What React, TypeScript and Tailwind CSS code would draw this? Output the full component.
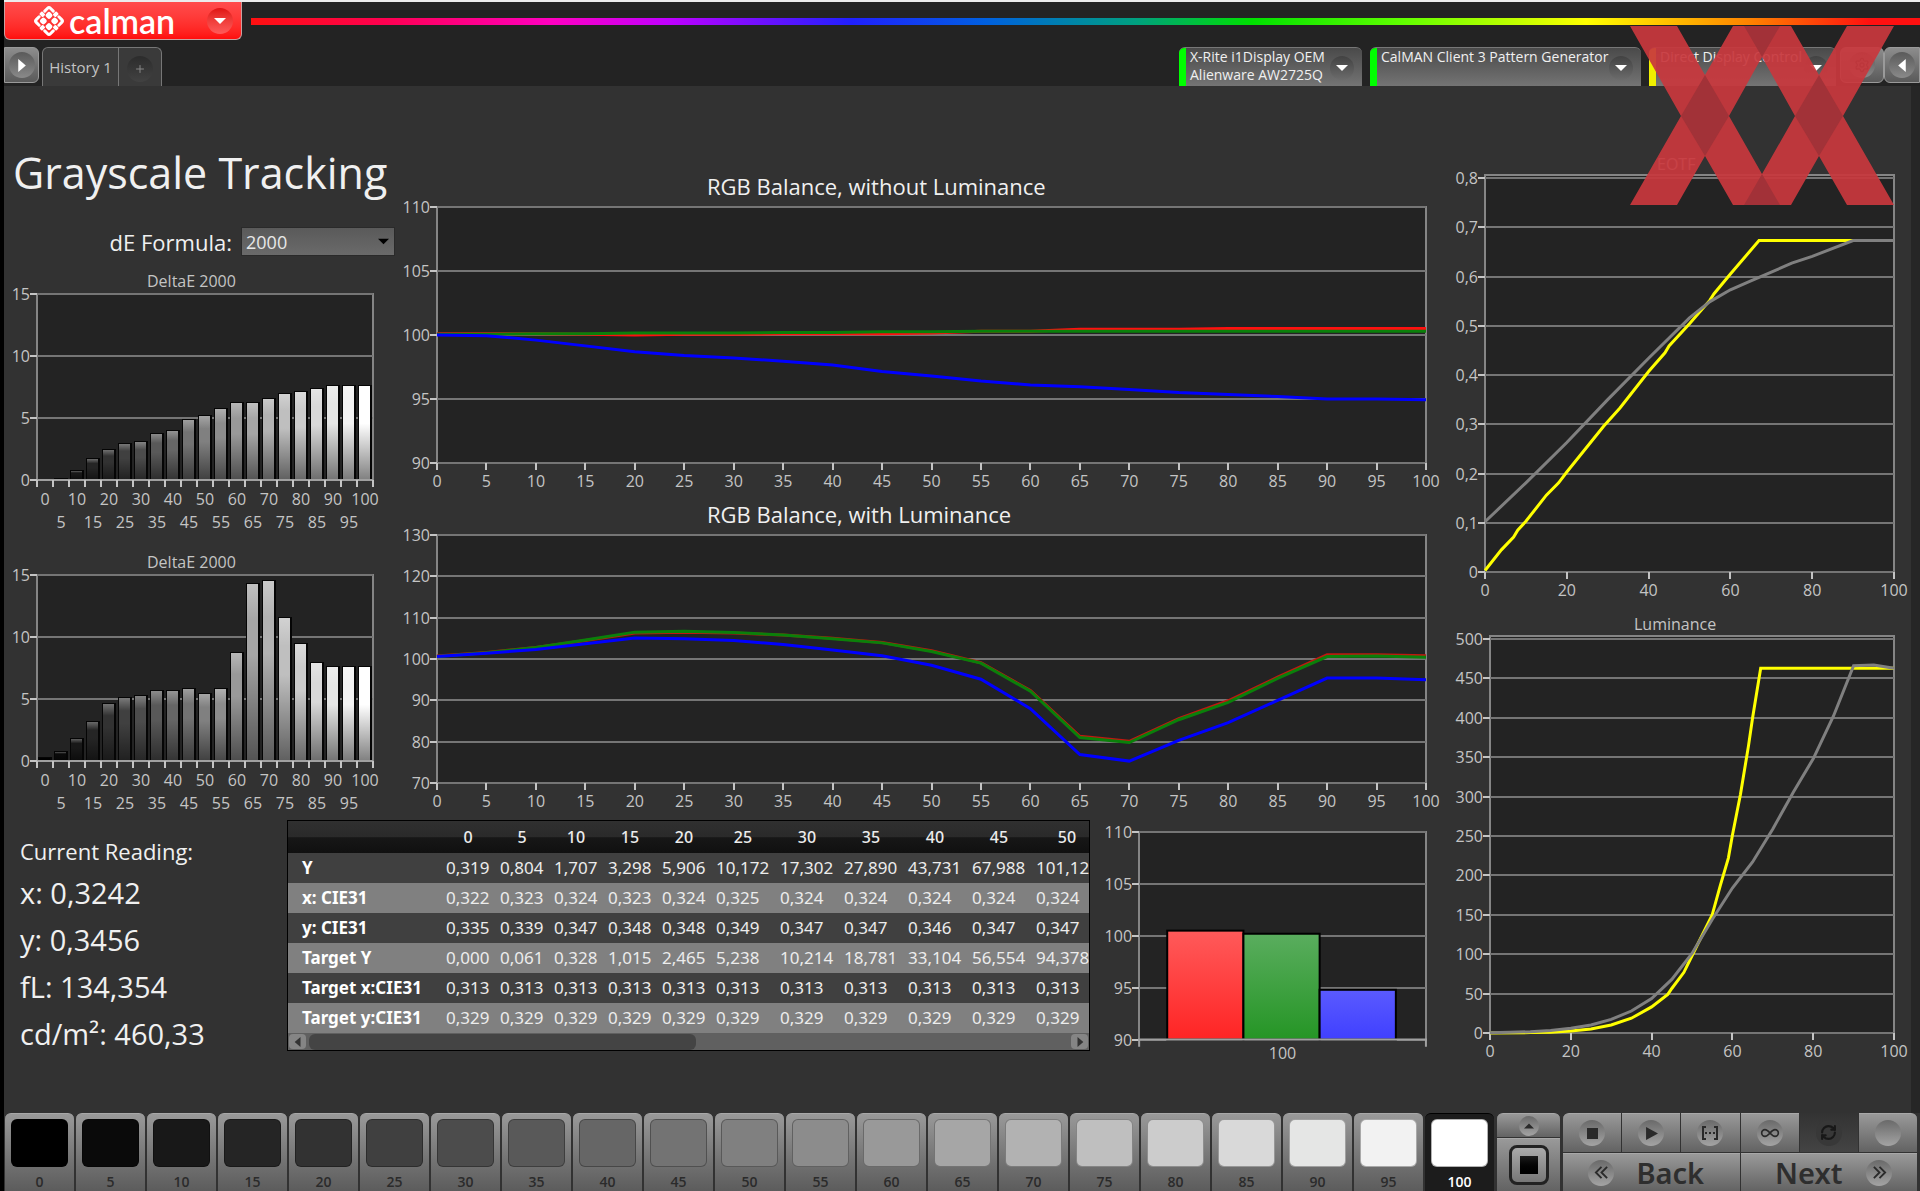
import React from 'react';
import { Infinity as InfinityIcon, Plus, RefreshCw, Settings } from 'lucide-react';
import clsx from 'clsx';

type Point = [number, number];

interface Plot {
  left: number;
  right: number;
  top: number;
  bottom: number;
}

interface Series {
  color: string;
  points: Point[];
}

const STEPS = Array.from({ length: 21 }, (_, i) => i * 5);
const SWATCHES = [
  '#000000', '#0a0a0a', '#181818', '#252525', '#323232', '#404040', '#4c4c4c',
  '#595959', '#666666', '#737373', '#808080', '#8c8c8c', '#999999', '#a6a6a6',
  '#b2b2b2', '#bfbfbf', '#cccccc', '#d9d9d9', '#e5e6e5', '#f2f2f2', '#ffffff',
];

const bySteps = (values: number[]): Point[] => values.map((v, i) => [i * 5, v]);

const DELTA_E = [0, 0.13, 0.8, 1.75, 2.5, 3, 3.12, 3.8, 4.05, 4.9, 5.25, 5.8, 6.3, 6.3, 6.65, 7.05, 7.2, 7.45, 7.7, 7.7, 7.7];
const DELTA_E_LUM = [0.35, 0.8, 1.85, 3.2, 4.65, 5.15, 5.35, 5.7, 5.7, 5.85, 5.5, 5.85, 8.8, 14.35, 14.6, 11.65, 9.55, 8, 7.65, 7.65, 7.65];

const BALANCE: Series[] = [
  { color: '#ff1010', points: bySteps([100.1, 100.1, 100.1, 100.05, 100, 100.05, 100.05, 100.1, 100.1, 100.1, 100.15, 100.3, 100.3, 100.45, 100.45, 100.45, 100.5, 100.5, 100.5, 100.5, 100.5]) },
  { color: '#0a800a', points: bySteps([100.05, 100.05, 100.1, 100.1, 100.15, 100.15, 100.15, 100.2, 100.2, 100.25, 100.25, 100.3, 100.3, 100.3, 100.3, 100.3, 100.3, 100.3, 100.3, 100.3, 100.3]) },
  { color: '#0000ff', points: bySteps([100, 99.95, 99.6, 99.15, 98.7, 98.4, 98.2, 97.95, 97.65, 97.15, 96.8, 96.4, 96.1, 95.95, 95.75, 95.5, 95.35, 95.2, 95, 95, 94.95]) },
];

const BALANCE_LUM: Series[] = [
  { color: '#c01810', points: bySteps([100.7, 101.6, 102.8, 104.5, 106.3, 106.5, 106.3, 105.8, 105, 104, 102, 99.1, 92.4, 81.3, 80.1, 85.6, 89.9, 95.6, 101, 101, 100.8]) },
  { color: '#0a800a', points: bySteps([100.6, 101.5, 102.8, 104.6, 106.5, 106.7, 106.4, 105.8, 104.9, 103.9, 101.8, 99, 92.2, 81, 79.8, 85.3, 89.5, 95.3, 100.6, 100.7, 100.4]) },
  { color: '#0000ff', points: bySteps([100.6, 101.4, 102.3, 103.7, 105.1, 104.9, 104.5, 103.5, 102.2, 100.8, 98.5, 95.1, 88, 76.9, 75.3, 80.3, 84.6, 90, 95.4, 95.4, 95]) },
];

const EOTF: Series[] = [
  { color: '#ffff00', points: [[0, 0.003], [4, 0.045], [7, 0.071], [8, 0.085], [10, 0.103], [15, 0.156], [18, 0.181], [20, 0.203], [29, 0.296], [33, 0.333], [40, 0.407], [44, 0.445], [45, 0.459], [50, 0.504], [55, 0.552], [56, 0.565], [60, 0.605], [67, 0.673], [100, 0.673]] },
  { color: '#808080', points: [[0, 0.102], [10, 0.181], [20, 0.263], [30, 0.35], [40, 0.434], [50, 0.516], [55, 0.549], [60, 0.573], [65, 0.591], [70, 0.609], [75, 0.627], [80, 0.641], [90, 0.673], [100, 0.673]] },
];

const LUMINANCE: Series[] = [
  { color: '#ffff00', points: [[0, 0], [10, 0.5], [15, 1], [20, 2.5], [25, 5.2], [30, 10.2], [35, 18.8], [40, 33.1], [44, 49], [45, 56.5], [48, 77], [50, 98], [55, 150], [57, 187], [59, 222], [60, 251], [62, 303], [64, 365], [65, 400], [67, 463], [100, 463]] },
  { color: '#808080', points: bySteps([0.3, 0.8, 1.7, 3.3, 5.9, 10.2, 17.3, 27.9, 43.7, 68, 101, 144, 184, 217, 259, 305, 348, 402, 466, 467, 463]) },
];

const COLUMNS = ['0', '5', '10', '15', '20', '25', '30', '35', '40', '45', '50'];
const ROWS = [
  { label: 'Y', values: ['0,319', '0,804', '1,707', '3,298', '5,906', '10,172', '17,302', '27,890', '43,731', '67,988', '101,12'] },
  { label: 'x: CIE31', values: ['0,322', '0,323', '0,324', '0,323', '0,324', '0,325', '0,324', '0,324', '0,324', '0,324', '0,324'] },
  { label: 'y: CIE31', values: ['0,335', '0,339', '0,347', '0,348', '0,348', '0,349', '0,347', '0,347', '0,346', '0,347', '0,347'] },
  { label: 'Target Y', values: ['0,000', '0,061', '0,328', '1,015', '2,465', '5,238', '10,214', '18,781', '33,104', '56,554', '94,378'] },
  { label: 'Target x:CIE31', values: COLUMNS.map(() => '0,313') },
  { label: 'Target y:CIE31', values: COLUMNS.map(() => '0,329') },
];

const label = 'fill-[#c4c4c4] text-[16px]';

interface AxesProps {
  plot: Plot;
  yTicks: number[];
  toY: (value: number) => number;
}

function Axes({ plot, yTicks, toY }: AxesProps) {
  return (
    <g shapeRendering="crispEdges">
      <rect
        x={plot.left}
        y={plot.top}
        width={plot.right - plot.left}
        height={plot.bottom - plot.top}
        fill="#232323"
        stroke="#858585"
        strokeWidth="2"
      />
      {yTicks.map((tick) => (
        <g key={tick}>
          <line x1={plot.left} x2={plot.right} y1={toY(tick)} y2={toY(tick)} stroke="#757575" strokeWidth="2" />
          <line x1={plot.left - 7} x2={plot.left} y1={toY(tick)} y2={toY(tick)} stroke="#c4c4c4" strokeWidth="2" />
        </g>
      ))}
    </g>
  );
}

function YLabels({ plot, yTicks, toY }: AxesProps) {
  return (
    <>
      {yTicks.map((tick) => (
        <text key={tick} x={plot.left - 7} y={toY(tick) + 6} textAnchor="end" className={label}>
          {String(tick).replace('.', ',')}
        </text>
      ))}
    </>
  );
}

interface LineChartProps {
  title: string;
  titleX: number;
  titleY: number;
  titleClass: string;
  width: number;
  height: number;
  plot: Plot;
  yTicks: number[];
  /** distance between the frame and the highest grid line */
  headroom?: number;
  xTicks: number[];
  series: Series[];
}

function LineChart({ title, titleX, titleY, titleClass, width, height, plot, yTicks, headroom = 0, xTicks, series }: LineChartProps) {
  const min = yTicks[0];
  const max = yTicks[yTicks.length - 1];
  const toX = (v: number) => plot.left + (v / 100) * (plot.right - plot.left);
  const toY = (v: number) => plot.bottom - ((v - min) / (max - min)) * (plot.bottom - plot.top - headroom);

  return (
    <svg viewBox={`0 0 ${width} ${height}`} className="block h-auto w-full" role="img" aria-label={title}>
      <text x={titleX} y={titleY} className={titleClass}>{title}</text>
      <Axes plot={plot} yTicks={yTicks} toY={toY} />
      <YLabels plot={plot} yTicks={yTicks} toY={toY} />
      {xTicks.map((tick) => (
        <g key={tick}>
          <line x1={toX(tick)} x2={toX(tick)} y1={plot.bottom} y2={plot.bottom + 7} stroke="#c4c4c4" strokeWidth="2" shapeRendering="crispEdges" />
          <text x={toX(tick)} y={plot.bottom + 24} textAnchor="middle" className={label}>{tick}</text>
        </g>
      ))}
      {series.map((s) => (
        <polyline
          key={s.color}
          points={s.points.map(([x, y]) => `${toX(x)},${toY(y)}`).join(' ')}
          fill="none"
          stroke={s.color}
          strokeWidth="3"
        />
      ))}
    </svg>
  );
}

function DeltaChart({ values, id }: { values: number[]; id: string }) {
  const plot = { left: 33, right: 369, top: 25, bottom: 211 };
  const yTicks = [0, 5, 10, 15];
  const toY = (v: number) => plot.bottom - (v / 15) * (plot.bottom - plot.top);

  return (
    <svg viewBox="0 0 393 266" className="block h-auto w-full" role="img" aria-label="DeltaE 2000">
      <defs>
        <linearGradient id={id} x1="0" y1="0" x2="0" y2="1">
          <stop offset="0" stopColor="#fff" stopOpacity="0.3" />
          <stop offset="0.2" stopColor="#fff" stopOpacity="0" />
          <stop offset="0.4" stopColor="#000" stopOpacity="0" />
          <stop offset="1" stopColor="#000" stopOpacity="0.5" />
        </linearGradient>
      </defs>
      <text x="143" y="18" className={label}>DeltaE 2000</text>
      <Axes plot={plot} yTicks={yTicks} toY={toY} />
      <YLabels plot={plot} yTicks={yTicks} toY={toY} />
      {values.map((value, i) => {
        const x = plot.left + i * 16 + 1;
        const height = plot.bottom - toY(value);
        return (
          <g key={i} shapeRendering="crispEdges">
            <rect x={x} y={toY(value)} width="14" height={height} fill="#050505" />
            <rect x={x + 1} y={toY(value) + 1} width="11" height={Math.max(height - 1, 0)} fill={SWATCHES[i]} />
            <rect x={x + 1} y={toY(value) + 1} width="11" height={Math.max(height - 1, 0)} fill={`url(#${id})`} />
          </g>
        );
      })}
      <line x1={plot.left} x2={plot.right} y1={plot.bottom} y2={plot.bottom} stroke="#a0a0a0" strokeWidth="2" shapeRendering="crispEdges" />
      {[...STEPS, 105].map((step, i) => (
        <line key={step} x1={plot.left + i * 16} x2={plot.left + i * 16} y1={plot.bottom} y2={plot.bottom + 7} stroke="#c4c4c4" strokeWidth="2" shapeRendering="crispEdges" />
      ))}
      {STEPS.map((step, i) => (
        <text key={step} x={plot.left + i * 16 + 8} y={plot.bottom + (i % 2 ? 48 : 25)} textAnchor="middle" className={label}>
          {step}
        </text>
      ))}
    </svg>
  );
}

function RgbBars() {
  const plot = { left: 49, right: 335, top: 12, bottom: 219 };
  const yTicks = [90, 95, 100, 105, 110];
  const toY = (v: number) => plot.bottom - ((v - 90) / 20) * (plot.bottom - plot.top);
  const bars = [
    { id: 'bar-r', x: 77, value: 100.5, from: '#ff5a5a', to: '#ff2424' },
    { id: 'bar-g', x: 153, value: 100.2, from: '#5aad5e', to: '#259525' },
    { id: 'bar-b', x: 229, value: 94.8, from: '#5a5aff', to: '#4040ff' },
  ];

  return (
    <svg viewBox="0 0 356 245" className="block h-auto w-full" role="img" aria-label="RGB levels">
      <defs>
        {bars.map((bar) => (
          <linearGradient key={bar.id} id={bar.id} x1="0" y1="0" x2="0" y2="1">
            <stop offset="0" stopColor={bar.from} />
            <stop offset="1" stopColor={bar.to} />
          </linearGradient>
        ))}
      </defs>
      <Axes plot={plot} yTicks={yTicks} toY={toY} />
      <YLabels plot={plot} yTicks={yTicks} toY={toY} />
      {bars.map((bar) => (
        <rect key={bar.id} x={bar.x} y={toY(bar.value)} width="76" height={plot.bottom - toY(bar.value)} fill={`url(#${bar.id})`} stroke="#000" strokeWidth="2" />
      ))}
      <path d={`M${plot.left} ${plot.bottom + 7}V${plot.bottom}H${plot.right}v7`} fill="none" stroke="#a0a0a0" strokeWidth="2" />
      <text x="192" y="238" textAnchor="middle" className={label}>100</text>
    </svg>
  );
}

function Disc({ className, children }: { className?: string; children?: React.ReactNode }) {
  return (
    <span className={clsx('flex shrink-0 items-center justify-center rounded-full', className ?? 'size-[26px] bg-linear-to-b from-[#6a6a6a] to-[#a4a4a4] text-[#2a2a2a]')}>
      {children}
    </span>
  );
}

function Arrow({ d, size = 12 }: { d: string; size?: number }) {
  return (
    <svg viewBox="0 0 12 12" width={size} height={size} fill="currentColor" aria-hidden="true">
      <path d={d} />
    </svg>
  );
}

const DOWN = 'M0 3h12L6 9z';
const RIGHT = 'M3 0v12l7-6z';
const LEFT = 'M9 0v12L2 6z';

function Logo() {
  return (
    <svg viewBox="0 0 32 32" className="size-8" fill="none" stroke="#fff" aria-hidden="true">
      <g transform="rotate(45 16 16)">
        <path strokeWidth="3" strokeLinecap="round" d="M12 6H8a2 2 0 0 0-2 2V12M20 6h4a2 2 0 0 1 2 2V12M12 26H8a2 2 0 0 1-2-2V20M20 26h4a2 2 0 0 0 2-2V20" />
        <g fill="#fff" stroke="none">
          <rect x="14" y="4" width="4" height="5" rx="1" />
          <rect x="14" y="23" width="4" height="5" rx="1" />
          <rect x="4" y="14" width="5" height="4" rx="1" />
          <rect x="23" y="14" width="5" height="4" rx="1" />
          <rect x="9" y="9" width="6" height="6" rx="2" />
          <rect x="17" y="9" width="6" height="6" rx="2" />
          <rect x="9" y="17" width="6" height="6" rx="2" />
          <rect x="17" y="17" width="6" height="6" rx="2" />
        </g>
      </g>
    </svg>
  );
}

function Watermark() {
  return (
    <svg viewBox="0 0 264 179" className="pointer-events-none absolute top-[26px] right-[26px] h-[179px] w-[264px]" aria-hidden="true">
      <path
        fill="#c8383d"
        fillOpacity="0.93"
        d="M0 0h47l28 49 28-49h58l28 49 28-49h47L213 90l51 89h-47l-28-49-28 49h-58l-28-49-28 49H0l51-89z M132 31L99 90l33 58 33-58z"
        fillRule="evenodd"
      />
      <g fill="#a03238" fillOpacity="0.95">
        <path d="M75 49l24 41-24 40-24-40zM189 49l24 41-24 40-24-40z" />
        <path d="M114 0h36l-18 31zM114 179h36l-18-31z" />
      </g>
    </svg>
  );
}

interface DeviceProps {
  lines: string[];
  stripe: string;
  width: string;
}

function Device({ lines, stripe, width }: DeviceProps) {
  return (
    <button className={clsx('flex h-[39px] items-start overflow-hidden rounded-t-md border-t border-[#777] bg-linear-to-b from-[#4a4a4a] to-[#747474] text-left', width)}>
      <span className={clsx('w-[7px] shrink-0 self-stretch', stripe)} />
      <span className="flex-1 pl-1 text-[14px] leading-[18px] whitespace-nowrap text-[#f0f0f0]">
        {lines.map((line) => (
          <span key={line} className="block">{line}</span>
        ))}
      </span>
      <Disc className="mt-2 mr-2 size-[24px] bg-linear-to-b from-[#424242] to-[#6c6c6c] text-white">
        <Arrow d={DOWN} />
      </Disc>
    </button>
  );
}

const chromeButton = 'flex items-center justify-center border border-[#9a9a9a] bg-linear-to-b from-[#8d8d8d] to-[#5a5a5a]';

function Header() {
  return (
    <header className="border-t-2 border-[#ececec] bg-[#232323]">
      <div className="flex items-center gap-[9px]">
        <button className="flex h-[38px] w-[238px] items-center rounded-b-md border border-t-0 border-[#c9a0a0] bg-linear-to-b from-[#ff4c4c] to-[#ff0c0c] pl-7 text-white" aria-label="calman menu">
          <Logo />
          <span className="flex-1 pl-1 text-left font-[Lato,sans-serif] text-[34px] leading-[38px] font-semibold">calman</span>
          <Disc className="mr-2 size-[26px] bg-linear-to-b from-[#e01010] to-[#ff5a5a] text-white">
            <Arrow d={DOWN} />
          </Disc>
        </button>
        <div className="h-[7px] flex-1 bg-[linear-gradient(90deg,#ff1010_0%,#ff0050_8%,#ff00c0_18%,#c000ff_25%,#2020ff_36%,#0060e0_44%,#00a080_53%,#00e000_60%,#60ff00_69%,#ffff00_80%,#ff8000_90%,#ff1010_97%)]" />
      </div>
      <div className="flex items-start justify-between pt-[7px]">
        <div className="flex">
          <button className={clsx(chromeButton, 'mr-[3px] h-[36px] w-[35px] rounded-r-md')} aria-label="Expand">
            <Disc className="size-[26px] bg-linear-to-b from-[#5a5a5a] to-[#8a8a8a] text-white">
              <Arrow d={RIGHT} size={13} />
            </Disc>
          </button>
          <button className="h-[39px] w-[77px] rounded-tl-md border border-b-0 border-[#777] bg-[#3a3a3a] text-[15px] text-[#c4c4c4]">
            History 1
          </button>
          <button className="flex h-[39px] w-[43px] items-center justify-center rounded-tr-md border border-b-0 border-l-0 border-[#777] bg-[#3a3a3a]" aria-label="Add history">
            <Disc className="mt-1 size-[26px] bg-linear-to-b from-[#2c2c2c] to-[#424242] text-[#888]">
              <Plus size={12} />
            </Disc>
          </button>
        </div>
        <div className="flex">
          <div className="mr-1 flex gap-2">
            <Device width="w-[183px]" stripe="bg-[#00ff00]" lines={['X-Rite i1Display OEM', 'Alienware AW2725Q']} />
            <Device width="w-[271px]" stripe="bg-[#00ff00]" lines={['CalMAN Client 3 Pattern Generator']} />
            <Device width="w-[187px]" stripe="bg-[#f0f000]" lines={['Direct Display Control']} />
          </div>
          <button className={clsx(chromeButton, 'h-[36px] w-[44px] rounded-md')} aria-label="Settings">
            <Disc className="size-[26px] bg-linear-to-b from-[#5a5a5a] to-[#8a8a8a] text-[#222]">
              <Settings size={16} />
            </Disc>
          </button>
          <button className={clsx(chromeButton, 'h-[36px] w-[36px] rounded-l-md')} aria-label="Collapse">
            <Disc className="size-[26px] bg-linear-to-b from-[#5a5a5a] to-[#8a8a8a] text-white">
              <Arrow d={LEFT} size={13} />
            </Disc>
          </button>
        </div>
      </div>
    </header>
  );
}

function ReadingsTable() {
  return (
    <div className="h-[231px] min-w-0 overflow-hidden border border-black bg-[#404040]">
      <table className="w-[815px] table-fixed border-collapse font-[Noto_Sans,sans-serif] text-[17px] leading-[20px] whitespace-nowrap text-[#ececec]">
        <colgroup>
          <col className="w-[153px]" />
          {COLUMNS.map((column, i) => (
            <col key={column} className={clsx(i < 5 ? 'w-[54px]' : i < 10 ? 'w-[64px]' : 'w-[72px]')} />
          ))}
        </colgroup>
        <thead>
          <tr className="h-[32px] bg-[linear-gradient(#303030,#2a2a2a_50%,#171717_52%,#101010)]">
            <td />
            {COLUMNS.map((column) => (
              <th key={column} scope="col" className="p-0 text-center text-[16px] font-medium">{column}</th>
            ))}
          </tr>
        </thead>
        <tbody>
          {ROWS.map((row) => (
            <tr key={row.label} className="h-[30px] odd:bg-[#404040] even:bg-[#808080]">
              <th scope="row" className="p-0 pl-[14px] text-left font-bold text-white">{row.label}</th>
              {row.values.map((value, i) => (
                <td key={i} className="p-0 pl-[5px]">{value}</td>
              ))}
            </tr>
          ))}
        </tbody>
      </table>
      <div className="flex h-[17px] items-center justify-between bg-[#606060] px-px text-[#333]">
        <button className="flex h-[15px] w-[17px] items-center justify-center rounded-sm bg-[#858585]" aria-label="Scroll left">
          <Arrow d={LEFT} size={10} />
        </button>
        <div className="flex-1 px-[3px]">
          <div className="h-[16px] w-[51%] rounded-md bg-[#444]" />
        </div>
        <button className="flex h-[15px] w-[17px] items-center justify-center rounded-sm bg-[#858585]" aria-label="Scroll right">
          <Arrow d={RIGHT} size={10} />
        </button>
      </div>
    </div>
  );
}

const footerButton = 'flex items-center justify-center border-t border-[#a8a8a8] bg-linear-to-b from-[#999] to-[#636363]';

function Footer() {
  return (
    <footer className="flex h-[78px] gap-[3px] pr-[3px] pl-px">
      <div className="flex flex-1 gap-[2px]">
        {STEPS.map((step, i) => {
          const active = step === 100;
          return (
            <button
              key={step}
              className={clsx(
                'flex flex-1 flex-col items-center rounded-t-md border-t pt-[5px] text-[14px] leading-[30px] font-semibold',
                active ? 'border-black bg-[#1c1c1c] text-white' : 'border-[#a8a8a8] bg-linear-to-b from-[#999] to-[#5c5c5c] text-[#2b2b2b]',
              )}
            >
              <span className="h-[48px] w-[57px] shrink-0 rounded-md border border-black/30" style={{ backgroundColor: SWATCHES[i] }} />
              {step}
            </button>
          );
        })}
      </div>
      <div className="flex w-[63px] flex-col gap-px">
        <button className={clsx(footerButton, 'h-[24px] rounded-t-md')} aria-label="More">
          <Disc className="size-5 bg-linear-to-b from-[#6a6a6a] to-[#a4a4a4] text-[#2a2a2a]">
            <Arrow d="M0 9h12L6 3z" size={10} />
          </Disc>
        </button>
        <button className={clsx(footerButton, 'flex-1')} aria-label="Window pattern">
          <span className="flex size-[40px] items-center justify-center rounded-lg border-[3px] border-[#222] bg-linear-to-b from-[#aaa] to-[#777]">
            <span className="size-[18px] bg-linear-to-b from-[#1c1c1c] to-black" />
          </span>
        </button>
      </div>
      <div className="flex w-[354px] flex-col gap-px">
        <div className="grid h-[39px] grid-cols-6 gap-px">
          <button className={clsx(footerButton, 'rounded-tl-md')} aria-label="Stop">
            <Disc><span className="size-[11px] bg-[#2a2a2a]" /></Disc>
          </button>
          <button className={footerButton} aria-label="Play">
            <Disc><Arrow d="M1 0v12l11-6z" size={13} /></Disc>
          </button>
          <button className={footerButton} aria-label="Read series">
            <Disc>
              <svg viewBox="0 0 18 16" width="18" height="16" fill="none" stroke="currentColor" strokeWidth="2" aria-hidden="true">
                <path d="M5 2H2v12h3M13 2h3v12h-3M4 8h2M8 8h2M12 8h2" />
              </svg>
            </Disc>
          </button>
          <button className={footerButton} aria-label="Continuous">
            <Disc><InfinityIcon size={20} /></Disc>
          </button>
          <button className="flex items-center justify-center bg-linear-to-b from-[#333] to-[#444]" aria-label="Refresh">
            <Disc className="size-[26px] bg-[#383838] text-[#181818]"><RefreshCw size={17} strokeWidth={3} /></Disc>
          </button>
          <button className={clsx(footerButton, 'rounded-tr-md')} aria-label="Record">
            <Disc />
          </button>
        </div>
        <div className="grid flex-1 grid-cols-2 gap-px font-[Noto_Sans,sans-serif] text-[29px] leading-[36px] font-semibold text-[#2e2e2e]">
          <button className={clsx(footerButton, 'gap-[22px] pr-[10px]')}>
            <Disc><Chevrons d="M8 2L2 8l6 6M14 2L8 8l6 6" /></Disc>
            Back
          </button>
          <button className={clsx(footerButton, 'gap-6 pl-[10px]')}>
            Next
            <Disc><Chevrons d="M2 2l6 6-6 6M8 2l6 6-6 6" /></Disc>
          </button>
        </div>
      </div>
    </footer>
  );
}

function Chevrons({ d }: { d: string }) {
  return (
    <svg viewBox="0 0 16 16" width="15" height="15" fill="none" stroke="currentColor" strokeWidth="2" aria-hidden="true">
      <path d={d} />
    </svg>
  );
}

export default function App() {
  return (
    <div className="relative flex min-h-screen flex-col border-l-4 border-black bg-[#323232] font-[Open_Sans,Noto_Sans,sans-serif] text-[#f0f0f0]">
      <Header />
      <main className="flex flex-1 items-start border-r-[9px] border-[#262626] pt-px">
        <div className="min-w-0 flex-[1443]">
          <div className="grid grid-cols-[393fr_1050fr]">
            <section className="pt-[58px]">
              <h1 className="pl-[9px] text-[43px] leading-[56px] whitespace-nowrap">Grayscale Tracking</h1>
              <div className="mt-[25px] mb-[12px] flex h-[31px] items-center justify-end gap-[9px] pr-[2px]">
                <label htmlFor="formula" className="text-[22px] leading-[30px]">dE Formula:</label>
                <div className="relative w-[154px] text-black">
                  <select id="formula" defaultValue="2000" className="h-[29px] w-full appearance-none border border-[#2a2a2a] bg-linear-to-b from-[#5a5a5a] to-[#6a6a6a] pl-1 text-[18px] leading-[26px] text-[#e8e8e8]">
                    <option>2000</option>
                  </select>
                  <span className="pointer-events-none absolute top-[9px] right-[6px]">
                    <Arrow d={DOWN} size={11} />
                  </span>
                </div>
              </div>
              <div className="flex flex-col gap-[15px]">
                <DeltaChart id="shade-1" values={DELTA_E} />
                <DeltaChart id="shade-2" values={DELTA_E_LUM} />
              </div>
            </section>
            <section className="pt-[83px]">
              <LineChart
                title="RGB Balance, without Luminance"
                titleX={310}
                titleY={25}
                titleClass="fill-[#f0f0f0] text-[22px]"
                width={1050}
                height={328}
                plot={{ left: 40, right: 1029, top: 37, bottom: 293 }}
                yTicks={[90, 95, 100, 105, 110]}
                xTicks={STEPS}
                series={BALANCE}
              />
              <LineChart
                title="RGB Balance, with Luminance"
                titleX={310}
                titleY={25}
                titleClass="fill-[#f0f0f0] text-[22px]"
                width={1050}
                height={318}
                plot={{ left: 40, right: 1029, top: 37, bottom: 285 }}
                yTicks={[70, 80, 90, 100, 110, 120, 130]}
                xTicks={STEPS}
                series={BALANCE_LUM}
              />
            </section>
          </div>
          <div className="mt-1 grid grid-cols-[283fr_803fr_357fr]">
            <section className="pt-[14px] pl-4 text-[29px] leading-[47px]">
              <h2 className="text-[22px] leading-[35px]">Current Reading:</h2>
              <p>x: 0,3242</p>
              <p>y: 0,3456</p>
              <p>fL: 134,354</p>
              <p>cd/m²: 460,33</p>
            </section>
            <ReadingsTable />
            <RgbBars />
          </div>
        </div>
        <section className="min-w-0 flex-[464] pt-[63px]">
          <LineChart
            title="EOTF"
            titleX={210}
            titleY={20}
            titleClass="fill-[#c4c4c4] text-[16px]"
            width={464}
            height={460}
            plot={{ left: 38, right: 447, top: 25, bottom: 422 }}
            headroom={3}
            yTicks={[0, 0.1, 0.2, 0.3, 0.4, 0.5, 0.6, 0.7, 0.8]}
            xTicks={[0, 20, 40, 60, 80, 100]}
            series={EOTF}
          />
          <LineChart
            title="Luminance"
            titleX={187}
            titleY={20}
            titleClass="fill-[#c4c4c4] text-[16px]"
            width={464}
            height={460}
            plot={{ left: 43, right: 447, top: 26, bottom: 423 }}
            headroom={3}
            yTicks={[0, 50, 100, 150, 200, 250, 300, 350, 400, 450, 500]}
            xTicks={[0, 20, 40, 60, 80, 100]}
            series={LUMINANCE}
          />
        </section>
      </main>
      <Footer />
      <Watermark />
    </div>
  );
}
